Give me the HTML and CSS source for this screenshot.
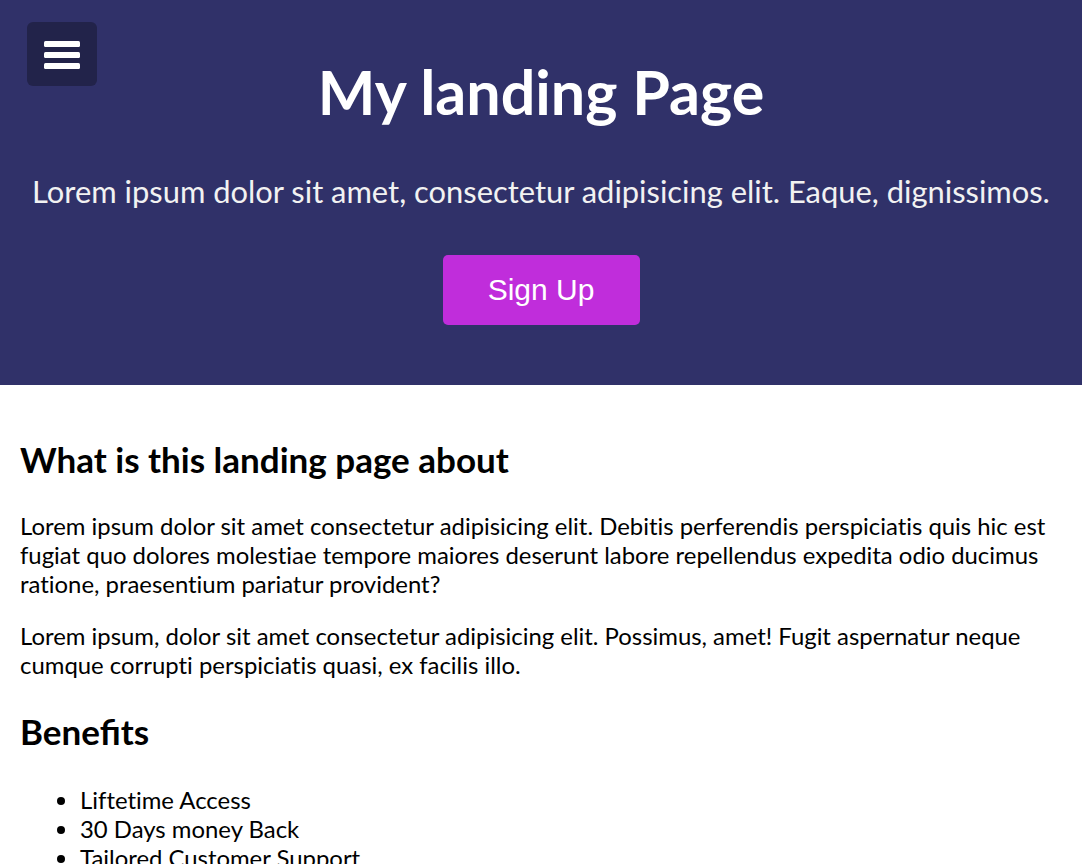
FILE: index.html
```html
<!DOCTYPE html>
<html lang="en">
<head>
<meta charset="utf-8">
<title>My landing Page</title>
<link rel="stylesheet" href="styles.css">
</head>
<body>
<header class="hero">
  <button class="menu-btn" aria-label="Menu">
    <svg width="36" height="30" viewBox="0 0 36 30"><rect x="0" y="2" width="36" height="6" rx="1.5" fill="#fff"/><rect x="0" y="13" width="36" height="6" rx="1.5" fill="#fff"/><rect x="0" y="24" width="36" height="6" rx="1.5" fill="#fff"/></svg>
  </button>
  <h1 class="hero-title">My landing Page</h1>
  <p class="hero-sub">Lorem ipsum dolor sit amet, consectetur adipisicing elit. Eaque, dignissimos.</p>
  <button class="signup">Sign Up</button>
</header>
<main class="content">
  <h2>What is this landing page about</h2>
  <p>Lorem ipsum dolor sit amet consectetur adipisicing elit. Debitis perferendis perspiciatis quis hic est fugiat quo dolores molestiae tempore maiores deserunt labore repellendus expedita odio ducimus ratione, praesentium pariatur provident?</p>
  <p>Lorem ipsum, dolor sit amet consectetur adipisicing elit. Possimus, amet! Fugit aspernatur neque cumque corrupti perspiciatis quasi, ex facilis illo.</p>
  <h2>Benefits</h2>
  <ul>
    <li>Liftetime Access</li>
    <li>30 Days money Back</li>
    <li>Tailored Customer Support</li>
  </ul>
</main>
</body>
</html>
```
FILE: styles.css
```css
* { box-sizing: border-box; }
body {
  margin: 0;
  font-family: Lato, "Noto Sans", sans-serif;
  font-size: 23.9px;
  line-height: 29px;
  color: #000;
  font-variant-ligatures: none;
}
.hero {
  position: relative;
  background: #303169;
  color: #fff;
  text-align: center;
  height: 385px;
  padding-top: 52px;
}
.menu-btn {
  position: absolute;
  left: 27px;
  top: 22px;
  width: 70px;
  height: 64px;
  border: 0;
  border-radius: 6px;
  background: #22234a;
  display: flex;
  align-items: center;
  justify-content: center;
  padding: 0;
}
.hero-title {
  margin: 0;
  font-size: 61px;
  line-height: 80px;
  font-weight: 700;
}
.hero-sub {
  margin: 41px 0 0;
  font-size: 30.9px;
  line-height: 38px;
  color: #f2f2f2;
}
.signup {
  display: block;
  margin: 44px auto 0;
  width: 197px;
  height: 70px;
  border: 0;
  border-radius: 5px;
  background: #c02ddb;
  color: #fff;
  font-family: "Liberation Sans", Arial, sans-serif;
  font-size: 30px;
  line-height: 68px;
}
.content {
  padding: 22px 20px 0;
}
.content h2 {
  font-size: 35px;
  line-height: 42px;
  margin: 31px 0 31px;
  font-variant-ligatures: normal;
}
.content p {
  margin: 0 0 23px;
}
.content ul {
  margin: 33px 0 0;
  padding-left: 60px;
}
```
